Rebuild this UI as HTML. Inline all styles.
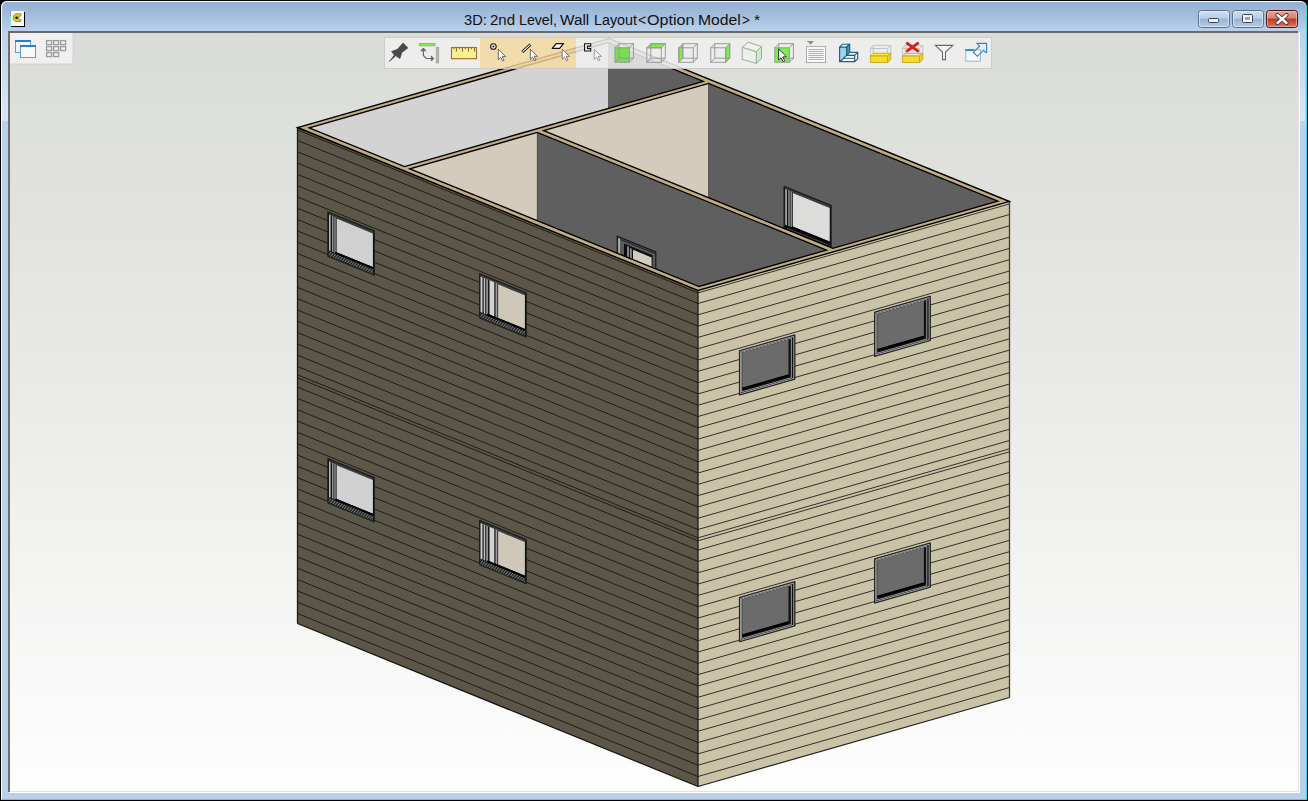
<!DOCTYPE html>
<html><head><meta charset="utf-8">
<style>
html,body{margin:0;padding:0;}
body{width:1308px;height:801px;overflow:hidden;background:#000;position:relative;font-family:"Liberation Sans",sans-serif;}
.abs{position:absolute;}
#cy{left:1px;top:1px;width:1306px;height:799px;background:#3ad6ee;border-radius:6px 6px 0 0;}
#wh{left:1px;top:1px;width:1305px;height:798px;background:#ffffff;border-radius:6px 6px 0 0;}
#fr{left:2px;top:2px;width:1304px;height:797px;border-radius:5px 5px 0 0;background:linear-gradient(to bottom,#93afd1 0px,#a6c0df 16px,#bad2ec 30px,#bad0e9 100%);}
.tw{top:10.7px;font-size:15.5px;color:#111;white-space:nowrap;transform-origin:0 0;}
#content{left:8px;top:31px;width:1292px;height:762px;}
#ct{left:8px;top:31px;width:1290px;height:2px;background:#6a6a6a;}
#cl{left:8px;top:31px;width:2px;height:761px;background:#6e6e6e;}
#cr1{left:1298px;top:33px;width:1px;height:759px;background:#e2e2e2;}
#cr2{left:1299px;top:32px;width:1px;height:761px;background:#ffffff;}
#cb1{left:10px;top:791px;width:1289px;height:1px;background:#e2e2e2;}
#cb2{left:9px;top:792px;width:1291px;height:1px;background:#ffffff;}
#bg{left:10px;top:33px;width:1288px;height:758px;background:linear-gradient(to bottom,#d9dcd6 0%,#e2e3df 25%,#ebebea 50%,#f5f5f4 75%,#fefefe 100%);overflow:hidden;}
svg{position:absolute;left:0;top:0;}
</style></head><body>
<div class="abs" id="cy"></div>
<div class="abs" id="wh"></div>
<div class="abs" id="fr"></div>
<div class="abs" style="left:2px;top:31px;width:6px;height:90px;background:linear-gradient(to bottom,#bcd2ea,#dae6f4);"></div>
<div class="abs" style="left:1300px;top:31px;width:5px;height:90px;background:linear-gradient(to bottom,#bcd2ea,#dae6f4);"></div>
<div class="abs tw" style="left:463.95px;transform:scaleX(0.945)">3D:</div><div class="abs tw" style="left:489.63px;transform:scaleX(0.967)">2nd</div><div class="abs tw" style="left:518.98px;transform:scaleX(0.915)">Level,</div><div class="abs tw" style="left:560.30px;transform:scaleX(0.990)">Wall</div><div class="abs tw" style="left:594.18px;transform:scaleX(0.922)">Layout</div><div class="abs tw" style="left:637.90px;transform:scaleX(0.900)">&lt;</div><div class="abs tw" style="left:646.56px;transform:scaleX(1.039)">Option</div><div class="abs tw" style="left:698.19px;transform:scaleX(1.015)">Model</div><div class="abs tw" style="left:741.73px;transform:scaleX(0.875)">&gt;</div><div class="abs tw" style="left:754.48px;transform:scaleX(1.020)">*</div>
<div class="abs" id="ct"></div><div class="abs" id="cl"></div>
<div class="abs" id="cr1"></div><div class="abs" id="cr2"></div>
<div class="abs" id="cb1"></div><div class="abs" id="cb2"></div>
<div class="abs" id="bg">
<svg width="1288" height="758" viewBox="10 33 1288 758" style="left:0;top:0">
<defs>
<pattern id="hatch" width="2.4" height="2.4" patternUnits="userSpaceOnUse" patternTransform="rotate(40)">
<rect width="2.4" height="2.4" fill="#202020"/><rect width="1.0" height="2.4" fill="#7a7a7a"/>
</pattern>
</defs>
<polygon points="309.19,127.85 607.97,42.49 607.97,538.49 309.19,623.85" fill="#d3d3d3"/>
<polygon points="607.97,42.49 997.81,201.15 997.81,697.15 607.97,538.49" fill="#5f5f5f"/>
<polygon points="784,186.13 831.21,205.35 831.21,249.85 784,230.63" fill="#141414" stroke="#1e1e1e" stroke-width="1.0" stroke-linejoin="miter"/>
<polygon points="785,187.34 830.21,205.74 830.21,208.14 785,189.74" fill="#3c3c3c"/>
<polygon points="785.4,189.3 786.7,189.83 786.7,225.23 785.4,224.7" fill="#dcdcdc"/>
<polygon points="788.4,190.52 789.6,191.01 789.6,226.41 788.4,225.92" fill="#b4b4b4"/>
<polygon points="790.7,191.46 791.7,191.87 791.7,227.27 790.7,226.86" fill="#c4c4c4"/>
<polygon points="792.8,192.91 829.71,207.93 829.71,241.63 792.8,226.61" fill="#dcdddb"/>
<polygon points="784.8,225.36 830.01,243.76 830.01,248.56 784.8,230.16" fill="#0c0c0c"/>
<line x1="787" y1="228.25" x2="829.71" y2="245.63" stroke="#4a4a4a" stroke-width="1.0"/>
<line x1="791.5" y1="227.09" x2="829.91" y2="242.72" stroke="#000" stroke-width="2.0"/>
<polygon points="409.83,168.81 708.61,83.45 708.61,579.45 409.83,664.81" fill="#d3cbbc"/>
<line x1="708.61" y1="83.45" x2="708.61" y2="579.45" stroke="#3c3c3c" stroke-width="0.8"/>
<polygon points="537.33,132.38 826.53,250.08 826.53,746.08 537.33,628.38" fill="#5f5f5f"/>
<line x1="537.33" y1="132.38" x2="537.33" y2="628.38" stroke="#3c3c3c" stroke-width="0.8"/>
<polygon points="617.23,236.2 655.82,251.91 655.82,296.61 617.23,280.9" fill="#5a5a5a" stroke="#111" stroke-width="1.1" stroke-linejoin="miter"/>
<polygon points="618.53,238.23 619.63,238.68 619.63,281.88 618.53,281.43" fill="#e8e8e8"/>
<polygon points="620.43,238.7 654.82,252.7 654.82,254.1 620.43,240.1" fill="#2a2a2a"/>
<polygon points="624.03,243.57 652.62,255.21 652.62,295.31 624.03,283.67" fill="#0e0e0e"/>
<polygon points="627.43,246.35 628.53,246.8 628.53,285.5 627.43,285.05" fill="#e4e4e4"/>
<polygon points="629.83,247.93 631.83,248.74 631.83,286.84 629.83,286.03" fill="#8a8a8a"/>
<polygon points="633.03,249.83 651.62,257.4 651.62,294.9 633.03,287.33" fill="#d3cbbc"/>
<polygon points="297.5,127.5 698,290.5 698,786.5 297.5,623.5" fill="#5c5649"/>
<polygon points="698,290.5 1009.5,201.5 1009.5,697.5 698,786.5" fill="#cbc3a8"/>
<line x1="297.5" y1="140.5" x2="698" y2="303.5" stroke="#1f1c17" stroke-width="1.0"/>
<line x1="698" y1="303.5" x2="1009.5" y2="214.5" stroke="#33302a" stroke-width="1.0"/>
<line x1="297.5" y1="151.8" x2="698" y2="314.8" stroke="#1f1c17" stroke-width="1.0"/>
<line x1="698" y1="314.8" x2="1009.5" y2="225.8" stroke="#33302a" stroke-width="1.0"/>
<line x1="297.5" y1="163.1" x2="698" y2="326.1" stroke="#1f1c17" stroke-width="1.0"/>
<line x1="698" y1="326.1" x2="1009.5" y2="237.1" stroke="#33302a" stroke-width="1.0"/>
<line x1="297.5" y1="174.4" x2="698" y2="337.4" stroke="#1f1c17" stroke-width="1.0"/>
<line x1="698" y1="337.4" x2="1009.5" y2="248.4" stroke="#33302a" stroke-width="1.0"/>
<line x1="297.5" y1="185.7" x2="698" y2="348.7" stroke="#1f1c17" stroke-width="1.0"/>
<line x1="698" y1="348.7" x2="1009.5" y2="259.7" stroke="#33302a" stroke-width="1.0"/>
<line x1="297.5" y1="197" x2="698" y2="360" stroke="#1f1c17" stroke-width="1.0"/>
<line x1="698" y1="360" x2="1009.5" y2="271" stroke="#33302a" stroke-width="1.0"/>
<line x1="297.5" y1="208.3" x2="698" y2="371.3" stroke="#1f1c17" stroke-width="1.0"/>
<line x1="698" y1="371.3" x2="1009.5" y2="282.3" stroke="#33302a" stroke-width="1.0"/>
<line x1="297.5" y1="219.6" x2="698" y2="382.6" stroke="#1f1c17" stroke-width="1.0"/>
<line x1="698" y1="382.6" x2="1009.5" y2="293.6" stroke="#33302a" stroke-width="1.0"/>
<line x1="297.5" y1="230.9" x2="698" y2="393.9" stroke="#1f1c17" stroke-width="1.0"/>
<line x1="698" y1="393.9" x2="1009.5" y2="304.9" stroke="#33302a" stroke-width="1.0"/>
<line x1="297.5" y1="242.2" x2="698" y2="405.2" stroke="#1f1c17" stroke-width="1.0"/>
<line x1="698" y1="405.2" x2="1009.5" y2="316.2" stroke="#33302a" stroke-width="1.0"/>
<line x1="297.5" y1="253.5" x2="698" y2="416.5" stroke="#1f1c17" stroke-width="1.0"/>
<line x1="698" y1="416.5" x2="1009.5" y2="327.5" stroke="#33302a" stroke-width="1.0"/>
<line x1="297.5" y1="264.8" x2="698" y2="427.8" stroke="#1f1c17" stroke-width="1.0"/>
<line x1="698" y1="427.8" x2="1009.5" y2="338.8" stroke="#33302a" stroke-width="1.0"/>
<line x1="297.5" y1="276.1" x2="698" y2="439.1" stroke="#1f1c17" stroke-width="1.0"/>
<line x1="698" y1="439.1" x2="1009.5" y2="350.1" stroke="#33302a" stroke-width="1.0"/>
<line x1="297.5" y1="287.4" x2="698" y2="450.4" stroke="#1f1c17" stroke-width="1.0"/>
<line x1="698" y1="450.4" x2="1009.5" y2="361.4" stroke="#33302a" stroke-width="1.0"/>
<line x1="297.5" y1="298.7" x2="698" y2="461.7" stroke="#1f1c17" stroke-width="1.0"/>
<line x1="698" y1="461.7" x2="1009.5" y2="372.7" stroke="#33302a" stroke-width="1.0"/>
<line x1="297.5" y1="310" x2="698" y2="473" stroke="#1f1c17" stroke-width="1.0"/>
<line x1="698" y1="473" x2="1009.5" y2="384" stroke="#33302a" stroke-width="1.0"/>
<line x1="297.5" y1="321.3" x2="698" y2="484.3" stroke="#1f1c17" stroke-width="1.0"/>
<line x1="698" y1="484.3" x2="1009.5" y2="395.3" stroke="#33302a" stroke-width="1.0"/>
<line x1="297.5" y1="332.6" x2="698" y2="495.6" stroke="#1f1c17" stroke-width="1.0"/>
<line x1="698" y1="495.6" x2="1009.5" y2="406.6" stroke="#33302a" stroke-width="1.0"/>
<line x1="297.5" y1="343.9" x2="698" y2="506.9" stroke="#1f1c17" stroke-width="1.0"/>
<line x1="698" y1="506.9" x2="1009.5" y2="417.9" stroke="#33302a" stroke-width="1.0"/>
<line x1="297.5" y1="355.2" x2="698" y2="518.2" stroke="#1f1c17" stroke-width="1.0"/>
<line x1="698" y1="518.2" x2="1009.5" y2="429.2" stroke="#33302a" stroke-width="1.0"/>
<line x1="297.5" y1="366.5" x2="698" y2="529.5" stroke="#1f1c17" stroke-width="1.0"/>
<line x1="698" y1="529.5" x2="1009.5" y2="440.5" stroke="#33302a" stroke-width="1.0"/>
<line x1="297.5" y1="377.8" x2="698" y2="540.8" stroke="#1f1c17" stroke-width="1.0"/>
<line x1="698" y1="540.8" x2="1009.5" y2="451.8" stroke="#33302a" stroke-width="1.0"/>
<line x1="297.5" y1="374.8" x2="698" y2="537.8" stroke="#1f1c17" stroke-width="1.0"/>
<line x1="698" y1="537.8" x2="1009.5" y2="448.8" stroke="#33302a" stroke-width="1.0"/>
<line x1="297.5" y1="387.1" x2="698" y2="550.1" stroke="#1f1c17" stroke-width="1.0"/>
<line x1="698" y1="550.1" x2="1009.5" y2="461.1" stroke="#33302a" stroke-width="1.0"/>
<line x1="297.5" y1="398.42" x2="698" y2="561.42" stroke="#1f1c17" stroke-width="1.0"/>
<line x1="698" y1="561.42" x2="1009.5" y2="472.42" stroke="#33302a" stroke-width="1.0"/>
<line x1="297.5" y1="409.74" x2="698" y2="572.74" stroke="#1f1c17" stroke-width="1.0"/>
<line x1="698" y1="572.74" x2="1009.5" y2="483.74" stroke="#33302a" stroke-width="1.0"/>
<line x1="297.5" y1="421.06" x2="698" y2="584.06" stroke="#1f1c17" stroke-width="1.0"/>
<line x1="698" y1="584.06" x2="1009.5" y2="495.06" stroke="#33302a" stroke-width="1.0"/>
<line x1="297.5" y1="432.38" x2="698" y2="595.38" stroke="#1f1c17" stroke-width="1.0"/>
<line x1="698" y1="595.38" x2="1009.5" y2="506.38" stroke="#33302a" stroke-width="1.0"/>
<line x1="297.5" y1="443.7" x2="698" y2="606.7" stroke="#1f1c17" stroke-width="1.0"/>
<line x1="698" y1="606.7" x2="1009.5" y2="517.7" stroke="#33302a" stroke-width="1.0"/>
<line x1="297.5" y1="455.02" x2="698" y2="618.02" stroke="#1f1c17" stroke-width="1.0"/>
<line x1="698" y1="618.02" x2="1009.5" y2="529.02" stroke="#33302a" stroke-width="1.0"/>
<line x1="297.5" y1="466.34" x2="698" y2="629.34" stroke="#1f1c17" stroke-width="1.0"/>
<line x1="698" y1="629.34" x2="1009.5" y2="540.34" stroke="#33302a" stroke-width="1.0"/>
<line x1="297.5" y1="477.66" x2="698" y2="640.66" stroke="#1f1c17" stroke-width="1.0"/>
<line x1="698" y1="640.66" x2="1009.5" y2="551.66" stroke="#33302a" stroke-width="1.0"/>
<line x1="297.5" y1="488.98" x2="698" y2="651.98" stroke="#1f1c17" stroke-width="1.0"/>
<line x1="698" y1="651.98" x2="1009.5" y2="562.98" stroke="#33302a" stroke-width="1.0"/>
<line x1="297.5" y1="500.3" x2="698" y2="663.3" stroke="#1f1c17" stroke-width="1.0"/>
<line x1="698" y1="663.3" x2="1009.5" y2="574.3" stroke="#33302a" stroke-width="1.0"/>
<line x1="297.5" y1="511.62" x2="698" y2="674.62" stroke="#1f1c17" stroke-width="1.0"/>
<line x1="698" y1="674.62" x2="1009.5" y2="585.62" stroke="#33302a" stroke-width="1.0"/>
<line x1="297.5" y1="522.94" x2="698" y2="685.94" stroke="#1f1c17" stroke-width="1.0"/>
<line x1="698" y1="685.94" x2="1009.5" y2="596.94" stroke="#33302a" stroke-width="1.0"/>
<line x1="297.5" y1="534.26" x2="698" y2="697.26" stroke="#1f1c17" stroke-width="1.0"/>
<line x1="698" y1="697.26" x2="1009.5" y2="608.26" stroke="#33302a" stroke-width="1.0"/>
<line x1="297.5" y1="545.58" x2="698" y2="708.58" stroke="#1f1c17" stroke-width="1.0"/>
<line x1="698" y1="708.58" x2="1009.5" y2="619.58" stroke="#33302a" stroke-width="1.0"/>
<line x1="297.5" y1="556.9" x2="698" y2="719.9" stroke="#1f1c17" stroke-width="1.0"/>
<line x1="698" y1="719.9" x2="1009.5" y2="630.9" stroke="#33302a" stroke-width="1.0"/>
<line x1="297.5" y1="568.22" x2="698" y2="731.22" stroke="#1f1c17" stroke-width="1.0"/>
<line x1="698" y1="731.22" x2="1009.5" y2="642.22" stroke="#33302a" stroke-width="1.0"/>
<line x1="297.5" y1="579.54" x2="698" y2="742.54" stroke="#1f1c17" stroke-width="1.0"/>
<line x1="698" y1="742.54" x2="1009.5" y2="653.54" stroke="#33302a" stroke-width="1.0"/>
<line x1="297.5" y1="590.86" x2="698" y2="753.86" stroke="#1f1c17" stroke-width="1.0"/>
<line x1="698" y1="753.86" x2="1009.5" y2="664.86" stroke="#33302a" stroke-width="1.0"/>
<line x1="297.5" y1="602.18" x2="698" y2="765.18" stroke="#1f1c17" stroke-width="1.0"/>
<line x1="698" y1="765.18" x2="1009.5" y2="676.18" stroke="#33302a" stroke-width="1.0"/>
<line x1="297.5" y1="613.5" x2="698" y2="776.5" stroke="#1f1c17" stroke-width="1.0"/>
<line x1="698" y1="776.5" x2="1009.5" y2="687.5" stroke="#33302a" stroke-width="1.0"/>
<line x1="297.5" y1="129.9" x2="698" y2="292.9" stroke="#1a1812" stroke-width="1.0" opacity="0.9"/>
<line x1="698" y1="292.9" x2="1009.5" y2="203.9" stroke="#2a261e" stroke-width="1.0" opacity="0.9"/>
<polygon points="327.81,211.84 374.38,230.79 374.38,275.29 327.81,256.34" fill="#141414" stroke="#1e1e1e" stroke-width="1.0" stroke-linejoin="miter"/>
<polygon points="328.81,213.04 373.38,231.18 373.38,233.58 328.81,215.44" fill="#3c3c3c"/>
<polygon points="329.21,215.01 330.51,215.54 330.51,250.94 329.21,250.41" fill="#dcdcdc"/>
<polygon points="332.21,216.23 333.41,216.72 333.41,252.12 332.21,251.63" fill="#b4b4b4"/>
<polygon points="334.51,217.16 335.51,217.57 335.51,252.97 334.51,252.56" fill="#c4c4c4"/>
<polygon points="336.61,218.62 372.88,233.38 372.88,267.08 336.61,252.32" fill="#d0d0d0"/>
<polygon points="328.61,251.06 373.18,269.2 373.18,274 328.61,255.86" fill="url(#hatch)"/>
<line x1="335.31" y1="252.79" x2="373.08" y2="268.16" stroke="#000" stroke-width="2.0"/>
<polygon points="327.81,458.54 374.38,477.49 374.38,521.99 327.81,503.04" fill="#141414" stroke="#1e1e1e" stroke-width="1.0" stroke-linejoin="miter"/>
<polygon points="328.81,459.74 373.38,477.88 373.38,480.28 328.81,462.14" fill="#3c3c3c"/>
<polygon points="329.21,461.71 330.51,462.24 330.51,497.64 329.21,497.11" fill="#dcdcdc"/>
<polygon points="332.21,462.93 333.41,463.42 333.41,498.82 332.21,498.33" fill="#b4b4b4"/>
<polygon points="334.51,463.86 335.51,464.27 335.51,499.67 334.51,499.26" fill="#c4c4c4"/>
<polygon points="336.61,465.32 372.88,480.08 372.88,513.78 336.61,499.02" fill="#d0d0d0"/>
<polygon points="328.61,497.76 373.18,515.9 373.18,520.7 328.61,502.56" fill="url(#hatch)"/>
<line x1="335.31" y1="499.49" x2="373.08" y2="514.86" stroke="#000" stroke-width="2.0"/>
<polygon points="479.51,273.58 526.39,292.66 526.39,337.16 479.51,318.08" fill="#141414" stroke="#1e1e1e" stroke-width="1.0" stroke-linejoin="miter"/>
<polygon points="480.51,274.78 525.39,293.05 525.39,295.45 480.51,277.18" fill="#3c3c3c"/>
<polygon points="480.51,276.58 482.51,277.4 482.51,312.8 480.51,311.98" fill="#cccccc"/>
<polygon points="483.71,277.89 485.21,278.5 485.21,313.9 483.71,313.29" fill="#c0c0c0"/>
<polygon points="486.11,278.86 488.01,279.64 488.01,315.04 486.11,314.26" fill="#8e8e8e"/>
<polygon points="489.51,280.25 494.01,282.08 494.01,317.48 489.51,315.65" fill="#d2d2d2"/>
<polygon points="494.01,282.08 495.81,282.81 495.81,318.21 494.01,317.48" fill="#505050"/>
<polygon points="495.81,282.81 497.31,283.42 497.31,318.82 495.81,318.21" fill="#a0a0a0"/>
<polygon points="498.11,284.35 524.89,295.25 524.89,328.95 498.11,318.05" fill="#cfc7b9"/>
<polygon points="480.31,312.8 525.19,331.07 525.19,335.87 480.31,317.6" fill="url(#hatch)"/>
<line x1="487.01" y1="314.53" x2="525.09" y2="330.03" stroke="#000" stroke-width="2.0"/>
<polygon points="479.51,520.28 526.39,539.36 526.39,583.86 479.51,564.78" fill="#141414" stroke="#1e1e1e" stroke-width="1.0" stroke-linejoin="miter"/>
<polygon points="480.51,521.48 525.39,539.75 525.39,542.15 480.51,523.88" fill="#3c3c3c"/>
<polygon points="480.51,523.28 482.51,524.1 482.51,559.5 480.51,558.68" fill="#cccccc"/>
<polygon points="483.71,524.59 485.21,525.2 485.21,560.6 483.71,559.99" fill="#c0c0c0"/>
<polygon points="486.11,525.56 488.01,526.34 488.01,561.74 486.11,560.96" fill="#8e8e8e"/>
<polygon points="489.51,526.95 494.01,528.78 494.01,564.18 489.51,562.35" fill="#d2d2d2"/>
<polygon points="494.01,528.78 495.81,529.51 495.81,564.91 494.01,564.18" fill="#505050"/>
<polygon points="495.81,529.51 497.31,530.12 497.31,565.52 495.81,564.91" fill="#a0a0a0"/>
<polygon points="498.11,531.05 524.89,541.95 524.89,575.65 498.11,564.75" fill="#cfc7b9"/>
<polygon points="480.31,559.5 525.19,577.77 525.19,582.57 480.31,564.3" fill="url(#hatch)"/>
<line x1="487.01" y1="561.23" x2="525.09" y2="576.73" stroke="#000" stroke-width="2.0"/>
<polygon points="739.4,350.67 794.98,334.79 794.98,379.29 739.4,395.17" fill="#121212" stroke="#1c1c1c" stroke-width="0.9" stroke-linejoin="miter"/>
<polygon points="740.6,351.53 793.78,336.33 793.78,378.43 740.6,393.63" fill="none" stroke="#c8c8c8" stroke-width="0.8" stroke-linejoin="miter"/>
<polygon points="741.7,352.31 791.38,338.12 791.38,377.72 741.7,391.91" fill="#121212" stroke="#bcbcbc" stroke-width="0.8" stroke-linejoin="miter"/>
<polygon points="742.3,352.74 788.48,339.55 788.48,374.55 742.3,387.74" fill="#6b6b6b"/>
<line x1="742.3" y1="388.74" x2="788.48" y2="375.55" stroke="#000" stroke-width="2.2"/>
<polygon points="739.4,597.37 794.98,581.49 794.98,625.99 739.4,641.87" fill="#121212" stroke="#1c1c1c" stroke-width="0.9" stroke-linejoin="miter"/>
<polygon points="740.6,598.23 793.78,583.03 793.78,625.13 740.6,640.33" fill="none" stroke="#c8c8c8" stroke-width="0.8" stroke-linejoin="miter"/>
<polygon points="741.7,599.01 791.38,584.82 791.38,624.42 741.7,638.61" fill="#121212" stroke="#bcbcbc" stroke-width="0.8" stroke-linejoin="miter"/>
<polygon points="742.3,599.44 788.48,586.25 788.48,621.25 742.3,634.44" fill="#6b6b6b"/>
<line x1="742.3" y1="635.44" x2="788.48" y2="622.25" stroke="#000" stroke-width="2.2"/>
<polygon points="874.49,312.07 930.38,296.11 930.38,340.61 874.49,356.57" fill="#121212" stroke="#1c1c1c" stroke-width="0.9" stroke-linejoin="miter"/>
<polygon points="875.69,312.93 929.18,297.65 929.18,339.75 875.69,355.03" fill="none" stroke="#c8c8c8" stroke-width="0.8" stroke-linejoin="miter"/>
<polygon points="876.79,313.72 926.78,299.43 926.78,339.03 876.79,353.32" fill="#121212" stroke="#bcbcbc" stroke-width="0.8" stroke-linejoin="miter"/>
<polygon points="877.39,314.15 923.88,300.86 923.88,335.86 877.39,349.15" fill="#6b6b6b"/>
<line x1="877.39" y1="350.15" x2="923.88" y2="336.86" stroke="#000" stroke-width="2.2"/>
<polygon points="874.49,558.77 930.38,542.81 930.38,587.31 874.49,603.27" fill="#121212" stroke="#1c1c1c" stroke-width="0.9" stroke-linejoin="miter"/>
<polygon points="875.69,559.63 929.18,544.35 929.18,586.45 875.69,601.73" fill="none" stroke="#c8c8c8" stroke-width="0.8" stroke-linejoin="miter"/>
<polygon points="876.79,560.42 926.78,546.13 926.78,585.73 876.79,600.02" fill="#121212" stroke="#bcbcbc" stroke-width="0.8" stroke-linejoin="miter"/>
<polygon points="877.39,560.85 923.88,547.56 923.88,582.56 877.39,595.85" fill="#6b6b6b"/>
<line x1="877.39" y1="596.85" x2="923.88" y2="583.56" stroke="#000" stroke-width="2.2"/>
<line x1="297.5" y1="127.5" x2="297.5" y2="623.5" stroke="#1d1b17" stroke-width="1.3"/>
<line x1="698" y1="290.5" x2="698" y2="786.5" stroke="#1d1b17" stroke-width="1.3"/>
<line x1="1009.5" y1="201.5" x2="1009.5" y2="697.5" stroke="#3d3a30" stroke-width="1.3"/>
<line x1="297.5" y1="623.5" x2="698" y2="786.5" stroke="#111" stroke-width="1.2"/>
<line x1="698" y1="786.5" x2="1009.5" y2="697.5" stroke="#222" stroke-width="1.2"/>
<path d="M297.5,127.5 L698,290.5 L1009.5,201.5 L609,38.5 Z M309.19,127.85 L404.5,166.64 L703.28,81.28 L607.97,42.49 Z M409.83,168.81 L699.03,286.51 L826.53,250.08 L537.33,132.38 Z M543.62,130.59 L832.82,248.29 L997.81,201.15 L708.61,83.45 Z" fill="#c0ad82" fill-rule="evenodd" stroke="#000" stroke-width="1.35" stroke-linejoin="miter"/>
</svg>
</div>
<svg width="1308" height="801" viewBox="0 0 1308 801" style="left:0;top:0;pointer-events:none">
<defs>
<linearGradient id="btnb" x1="0" y1="0" x2="0" y2="1">
<stop offset="0" stop-color="#cfe0f2"/><stop offset="0.45" stop-color="#b8cfe8"/><stop offset="0.5" stop-color="#98b3d3"/><stop offset="1" stop-color="#b4cde9"/>
</linearGradient>
<linearGradient id="btnr" x1="0" y1="0" x2="0" y2="1">
<stop offset="0" stop-color="#eaa89a"/><stop offset="0.45" stop-color="#d8806c"/><stop offset="0.5" stop-color="#b83c22"/><stop offset="1" stop-color="#d87a62"/>
</linearGradient>
</defs>
<!-- app icon -->
<rect x="11" y="12" width="14" height="15" fill="#000"/>
<rect x="11" y="11" width="13" height="15" fill="#fdfdfd"/>
<rect x="10" y="11" width="1" height="5" fill="#a888e8"/><rect x="10" y="16" width="1" height="10.5" fill="#88ecd0"/>
<path d="M15.4,13.7 L20.8,13.7 L20.8,16 L18.7,16.6 L18.7,18.9 L20.8,19.5 L20.8,21.6 L15.4,21.6 L13.4,19.6 L13.4,15.7 Z" fill="#d6cf1c" stroke="#6e6a2a" stroke-width="0.7" stroke-linejoin="round"/>
<circle cx="16.6" cy="17.8" r="1.3" fill="#0a0a0a"/>
<!-- caption buttons -->
<rect x="1198.5" y="10.5" width="31" height="17" rx="3" fill="url(#btnb)" stroke="#5d6f88" stroke-width="1"/>
<rect x="1199.5" y="11.5" width="29" height="15" rx="2" fill="none" stroke="#e6eef8" stroke-opacity="0.7" stroke-width="1"/>
<rect x="1208.5" y="18.5" width="10" height="4" rx="1" fill="#f4f4f4" stroke="#3a4452" stroke-width="1"/>
<rect x="1232.5" y="10.5" width="31" height="17" rx="3" fill="url(#btnb)" stroke="#5d6f88" stroke-width="1"/>
<rect x="1233.5" y="11.5" width="29" height="15" rx="2" fill="none" stroke="#e6eef8" stroke-opacity="0.7" stroke-width="1"/>
<rect x="1242.5" y="14.5" width="10" height="8" rx="1" fill="#f4f4f4" stroke="#3a4452" stroke-width="1"/>
<rect x="1245" y="17" width="5" height="3" fill="#8aa6c8"/>
<rect x="1266.5" y="10.5" width="31" height="17" rx="3" fill="url(#btnr)" stroke="#4a1418" stroke-width="1"/>
<rect x="1267.5" y="11.5" width="29" height="15" rx="2" fill="none" stroke="#f4c8bc" stroke-opacity="0.6" stroke-width="1"/>
<path d="M1277.5,15 L1286.5,23 M1286.5,15 L1277.5,23" stroke="#3a3040" stroke-width="4.2" stroke-linecap="round"/>
<path d="M1277.5,15 L1286.5,23 M1286.5,15 L1277.5,23" stroke="#f6f6f6" stroke-width="2.4" stroke-linecap="round"/>

<!-- small toolbar -->
<rect x="10" y="33" width="63.5" height="31.5" fill="#d2d2d2"/>
<rect x="10" y="33" width="62.5" height="30.5" fill="#f0f0f0"/>
<rect x="15.5" y="40.5" width="15" height="12" fill="#f6f6f6" stroke="#5aa0d4" stroke-width="1"/>
<rect x="15" y="40" width="16" height="2" fill="#2a80c8"/>
<rect x="20.5" y="45.5" width="15" height="12" fill="#f8f8f8" stroke="#5aa0d4" stroke-width="1"/>
<rect x="20" y="45" width="16" height="2" fill="#2a80c8"/>
<g fill="none" stroke="#9c9c9c" stroke-width="1.3">
<rect x="46.6" y="40.6" width="5" height="4"/><rect x="53.6" y="40.6" width="5" height="4"/><rect x="60.6" y="40.6" width="5" height="4"/>
<rect x="46.6" y="46.6" width="5" height="4"/><rect x="53.6" y="46.6" width="5" height="4"/><rect x="60.6" y="46.6" width="5" height="4"/>
<rect x="46.6" y="52.6" width="5" height="4"/><rect x="53.6" y="52.6" width="5" height="4"/>
</g>

<!-- main toolbar -->
<rect x="384.5" y="37.5" width="607" height="31" fill="none" stroke="#cacaca" stroke-opacity="0.9" stroke-width="1"/>
<rect x="385" y="38" width="95" height="30" fill="#f0f0f0" fill-opacity="0.86"/>
<rect x="576" y="38" width="415" height="30" fill="#f0f0f0" fill-opacity="0.86"/>
<rect x="480" y="38" width="96" height="30" fill="#f9dca0" fill-opacity="0.8"/>
<!-- pin -->
<path d="M403.1,43 L407.9,47.9 L401.8,52.6 L399.9,58.6 L395.8,55.8 L389.3,61.6 L394.3,55 L391.6,51.5 L397.4,49.3 Z" fill="#4a4a4a" stroke="#3a3a3a" stroke-width="0.6" stroke-linejoin="round"/>
<!-- align -->
<rect x="419.5" y="43.5" width="15.5" height="2.3" fill="#7ef04a" stroke="#a89ca8" stroke-width="0.9"/>
<rect x="436.3" y="47.5" width="2.3" height="15.3" fill="#7ef04a" stroke="#a89ca8" stroke-width="0.9"/>
<path d="M423.4,48.5 L423.4,55.5 L426.3,58.5 L433,58.5" fill="none" stroke="#6a6a6a" stroke-width="1.2"/>
<path d="M420.8,50.8 L423.4,48 L426,50.8 Z M431.3,56 L434,58.5 L431.3,61 Z" fill="#6a6a6a" stroke="#6a6a6a" stroke-width="0.8"/>
<!-- ruler -->
<rect x="451.5" y="47.5" width="25" height="11.2" fill="#f8f090" stroke="#9a7022" stroke-width="1.1"/>
<g stroke="#7a6028" stroke-width="1">
<path d="M456.4,48 V51.6 M462.4,48 V51.6 M468.4,48 V51.6 M474.5,48 V51.6 M453.8,48 V49.2 M459.4,48 V49.2 M465.3,48 V49.2 M471.4,48 V49.2"/>
</g>
<!-- cursors -->
<g id="cur" >
</g>
<!-- select point -->
<circle cx="493.4" cy="46.5" r="2.8" fill="#fff" stroke="#111" stroke-width="1.1"/>
<circle cx="493.4" cy="46.5" r="1.0" fill="#111"/>
<path d="M498.3,49.2 L498.3,59.6 L500.6,57.4 L502.6,61 L504.1,60.2 L502.2,56.6 L505.6,56.5 Z" fill="#fafafa" stroke="#333" stroke-width="0.7" stroke-linejoin="round"/>
<!-- select line -->
<path d="M522.3,52 L530.4,44.6" stroke="#111" stroke-width="2.8"/>
<path d="M522.6,51.7 L530.1,44.9" stroke="#fafafa" stroke-width="1.1"/>
<path d="M530.3,49.3 L530.3,59.4 L532.6,57.2 L534.6,60.8 L536.1,60 L534.2,56.4 L537.6,56.4 Z" fill="#fafafa" stroke="#333" stroke-width="0.7" stroke-linejoin="round"/>
<!-- select face -->
<path d="M552.2,48.3 L556.2,43.6 L563.5,43.6 L559.6,48.3 Z" fill="#fff" stroke="#111" stroke-width="1.2" stroke-linejoin="round"/>
<path d="M562.2,49.3 L562.2,59.4 L564.5,57.2 L566.5,60.8 L568,60 L566.1,56.4 L569.5,56.4 Z" fill="#fafafa" stroke="#555" stroke-width="0.7" stroke-linejoin="round"/>
<!-- C select -->
<path d="M590.7,43.7 L584.6,43.7 L584.6,51 L590.7,51 L590.7,48.6 L587.4,48.6 L587.4,46.1 L590.7,46.1 Z" fill="#fff" stroke="#111" stroke-width="1.15"/>
<path d="M594.2,49.3 L594.2,59.4 L596.5,57.2 L598.5,60.8 L600,60 L598.1,56.4 L601.5,56.4 Z" fill="#f6f6f6" stroke="#777" stroke-width="0.7" stroke-linejoin="round"/>
<!-- cubes -->
<g fill="none" stroke="#9a9a9a" stroke-width="1">
<rect x="614.9" y="47.8" width="14.5" height="14.5" fill="#6ee044" fill-opacity="0.95"/>
<rect x="618.9" y="43.7" width="14.5" height="14.5"/>
<path d="M614.9,47.8 L618.9,43.7 M629.4,47.8 L633.4,43.7 M629.4,62.3 L633.4,58.2 M614.9,62.3 L618.9,58.2"/>
</g>
<g fill="none" stroke="#9a9a9a" stroke-width="1">
<path d="M646.8,47.8 L650.8,43.7 L665.3,43.7 L661.3,47.8 Z" fill="#7af048"/>
<rect x="646.8" y="47.8" width="14.5" height="14.5"/>
<rect x="650.8" y="43.7" width="14.5" height="14.5"/>
<path d="M661.3,62.3 L665.3,58.2 M646.8,62.3 L650.8,58.2"/>
</g>
<g fill="none" stroke="#9a9a9a" stroke-width="1">
<path d="M678.8,47.8 L682.8,43.7 L682.8,58.2 L678.8,62.3 Z" fill="#7af048"/>
<rect x="678.8" y="47.8" width="14.5" height="14.5"/>
<rect x="682.8" y="43.7" width="14.5" height="14.5"/>
<path d="M693.3,47.8 L697.3,43.7 M693.3,62.3 L697.3,58.2"/>
</g>
<g fill="none" stroke="#9a9a9a" stroke-width="1">
<path d="M725.7,47.8 L729.7,43.7 L729.7,58.2 L725.7,62.3 Z" fill="#7af048"/>
<rect x="710.8" y="47.8" width="14.9" height="14.5"/>
<rect x="714.8" y="43.7" width="14.9" height="14.5"/>
<path d="M710.8,47.8 L714.8,43.7 M710.8,62.3 L714.8,58.2"/>
</g>
<g stroke="#a6a6a6" stroke-width="1" stroke-linejoin="round">
<path d="M742.2,47.4 L748,42.2 L761.5,46.6 L756.4,51.8 Z" fill="#e8f6e4"/>
<path d="M742.2,47.4 L756.4,51.8 L756.4,63.4 L742.2,59.4 Z" fill="#e6f4e2"/>
<path d="M756.4,51.8 L761.5,46.6 L761.5,58.3 L756.4,63.4 Z" fill="#cdebc6"/>
</g>
<g fill="none" stroke="#9a9a9a" stroke-width="1">
<rect x="774.8" y="47.8" width="14.6" height="14.5" fill="#7af048"/>
<rect x="778.8" y="43.7" width="14.6" height="14.5"/>
<path d="M774.8,47.8 L778.8,43.7 M789.4,47.8 L793.4,43.7 M789.4,62.3 L793.4,58.2"/>
</g>
<path d="M778.6,48.9 L778.6,60.1 L781,57.8 L783.2,61.6 L784.8,60.8 L782.7,57 L786.3,56.6 Z" fill="#fff" stroke="#111" stroke-width="0.8" stroke-linejoin="round"/>
<!-- list -->
<path d="M807.2,41 L814,41 L810.6,44.8 Z" fill="#8a8a8a"/>
<rect x="806.5" y="46.6" width="19" height="15.8" fill="#fff" stroke="#a8a8a8" stroke-width="1"/>
<g stroke="#a0a0a0" stroke-width="0.9"><path d="M808.3,49.4 H823.8 M808.3,51.4 H823.8 M808.3,53.4 H823.8 M808.3,55.4 H823.8 M808.3,57.4 H823.8 M808.3,59.4 H823.8"/></g>
<!-- L block -->
<g stroke="#23607e" stroke-width="1.15" stroke-linejoin="round">
<path d="M839.6,47.2 L842.6,44.2 L849.7,44.2 L846.6,47.2 Z" fill="#dff2fa"/>
<path d="M846.6,47.2 L849.7,44.2 L849.7,52.4 L846.6,55.4 Z" fill="#4898c0"/>
<path d="M839.6,47.2 L846.6,47.2 L846.6,55.4 L841.6,60.4 L839.6,61.6 Z" fill="#a0d4ee"/>
<path d="M846.6,55.4 L849.7,52.4 L857.7,52.4 L854.7,55.4 Z" fill="#ffffff"/>
<path d="M846.6,55.4 L854.7,55.4 L854.7,61.6 L839.6,61.6 L841.6,60.4 Z" fill="#ffffff"/>
<path d="M854.7,55.4 L857.7,52.4 L857.7,58.8 L854.7,61.6 Z" fill="#ffffff"/>
</g>
<path d="M843.3,58.3 L854.7,58.3" stroke="#23607e" stroke-width="1"/>
<!-- yellow box -->
<g transform="translate(0,0)">
<g stroke="#c4c4c4" stroke-width="1" fill="none">
<path d="M870.4,48.5 L873.3,45.3 L890.8,45.3 L887.6,48.5 Z M873.3,45.3 V53.3 M890.8,45.3 V53.3 M870.4,48.5 V56 M887.6,48.5 V56"/>
</g>
<path d="M870.4,56 L873.3,53.3 L890.8,53.3 L887.6,56 Z" fill="#f8f41c" stroke="#c8a420" stroke-width="0.9" stroke-linejoin="round"/>
<path d="M870.4,56 L887.6,56 L887.6,62.5 L870.4,62.5 Z" fill="#f6dc2a" stroke="#c8a420" stroke-width="0.9"/>
<path d="M887.6,56 L890.8,53.3 L890.8,59.5 L887.6,62.5 Z" fill="#f0d428" stroke="#c8a420" stroke-width="0.9" stroke-linejoin="round"/>
</g>
<!-- yellow box x -->
<g transform="translate(32,0)">
<g stroke="#c4c4c4" stroke-width="1" fill="none">
<path d="M870.4,48.5 L873.3,45.3 L890.8,45.3 L887.6,48.5 Z M873.3,45.3 V53.3 M890.8,45.3 V53.3 M870.4,48.5 V56 M887.6,48.5 V56"/>
</g>
<path d="M870.4,56 L873.3,53.3 L890.8,53.3 L887.6,56 Z" fill="#e8e8f4" stroke="#c8a420" stroke-width="0.9" stroke-linejoin="round"/>
<path d="M870.4,56 L887.6,56 L887.6,62.5 L870.4,62.5 Z" fill="#f6dc2a" stroke="#c8a420" stroke-width="0.9"/>
<path d="M887.6,56 L890.8,53.3 L890.8,59.5 L887.6,62.5 Z" fill="#f0d428" stroke="#c8a420" stroke-width="0.9" stroke-linejoin="round"/>
<path d="M873.3,53.3 V55 M887.6,48.5 V56" stroke="#c4c4c4" stroke-width="1"/>
</g>
<path d="M906.3,42.6 L918.7,51.6 M918.7,42.6 L906.3,51.6" stroke="#d42222" stroke-width="2.9"/>
<!-- funnel -->
<path d="M935.3,45.4 L952.8,45.4 L945.5,52 L945.5,59.6 L942.5,59.6 L942.5,52 Z" fill="#fafafa" stroke="#6a6a6a" stroke-width="1.1" stroke-linejoin="miter"/>
<!-- export -->
<rect x="965.8" y="49.8" width="14.6" height="11.4" fill="#f8f8f8" stroke="#8cbcdc" stroke-width="1"/>
<rect x="965.3" y="49.2" width="9" height="1.8" fill="#2a84cc"/>
<path d="M977.1,43.4 L986.6,43.4 L986.6,52.4 L985.7,52.4 L983.4,50.2 L977.4,56.3 L973.3,52.4 L979.6,46.2 Z" fill="none" stroke="#2a84cc" stroke-width="1.1" stroke-linejoin="miter"/>
</svg>

</body></html>
